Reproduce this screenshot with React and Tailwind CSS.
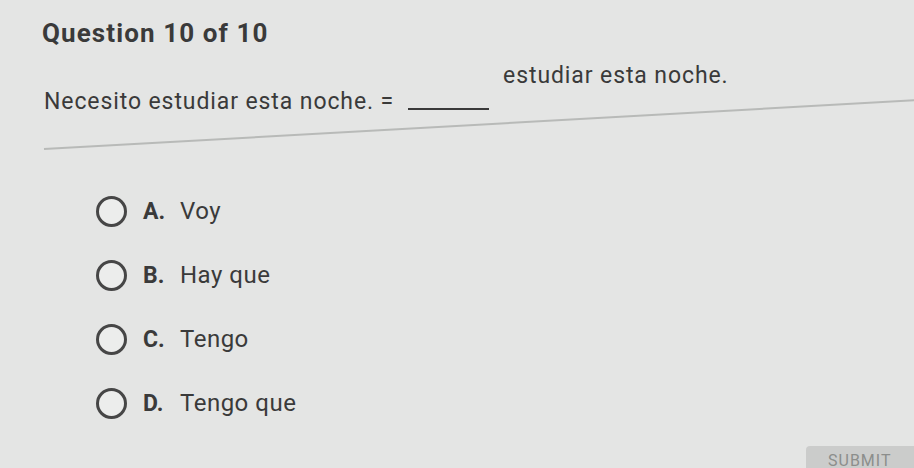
import React from 'react';

const options = [
  { letter: 'A.', text: 'Voy' },
  { letter: 'B.', text: 'Hay que' },
  { letter: 'C.', text: 'Tengo' },
  { letter: 'D.', text: 'Tengo que' },
];

const App = () => {
  return (
    <div
      className="w-[914px] h-[468px] overflow-hidden bg-[#e4e5e4] text-[#3a3a3a] flex flex-col"
      style={{ fontFamily: 'Roboto, "Liberation Sans", Arial, sans-serif' }}
    >
      {/* Titulo */}
      <div className="pl-[42px] pt-[16px] text-[26px] font-bold leading-[34px] tracking-[1.1px]">
        Question 10 of 10
      </div>

      {/* Enunciado */}
      <div className="pl-[44px] pt-[38px] flex items-end text-[23px] leading-[28px] tracking-[0.9px]">
        <span>Necesito estudiar esta noche. =</span>
        <span className="inline-block w-[81px] h-[2px] bg-[#3a3a3a] mx-[14px] mb-[6px]"></span>
        <span className="relative -top-[26px]">estudiar esta noche.</span>
      </div>

      {/* Separador */}
      <div className="ml-[44px] mt-[32px] h-[2px] w-[900px] bg-[#b8bab8] origin-left -rotate-[3.2deg]"></div>

      {/* Opciones */}
      <div className="pl-[96px] pt-[46px] flex flex-col gap-[33px]">
        {options.map((opt) => (
          <div key={opt.letter} className="flex items-center h-[31px]">
            <span className="w-[31px] h-[31px] rounded-full border-[3px] border-[#464646] bg-[#ecedec]"></span>
            <div className="ml-[16px] flex items-baseline text-[24px]">
              <span className="w-[37px] text-[23px] font-bold">{opt.letter}</span>
              <span className="tracking-[0.5px]">{opt.text}</span>
            </div>
          </div>
        ))}
      </div>

      {/* Boton */}
      <div className="flex justify-end mt-auto">
        <div className="w-[108px] h-[22px] bg-[#cbcccb] rounded-tl-[4px] pl-[22px] pt-[6px] text-[16px] leading-[18px] text-[#8c8e8c] tracking-[1px]">
          SUBMIT
        </div>
      </div>
    </div>
  );
};

export default App;
